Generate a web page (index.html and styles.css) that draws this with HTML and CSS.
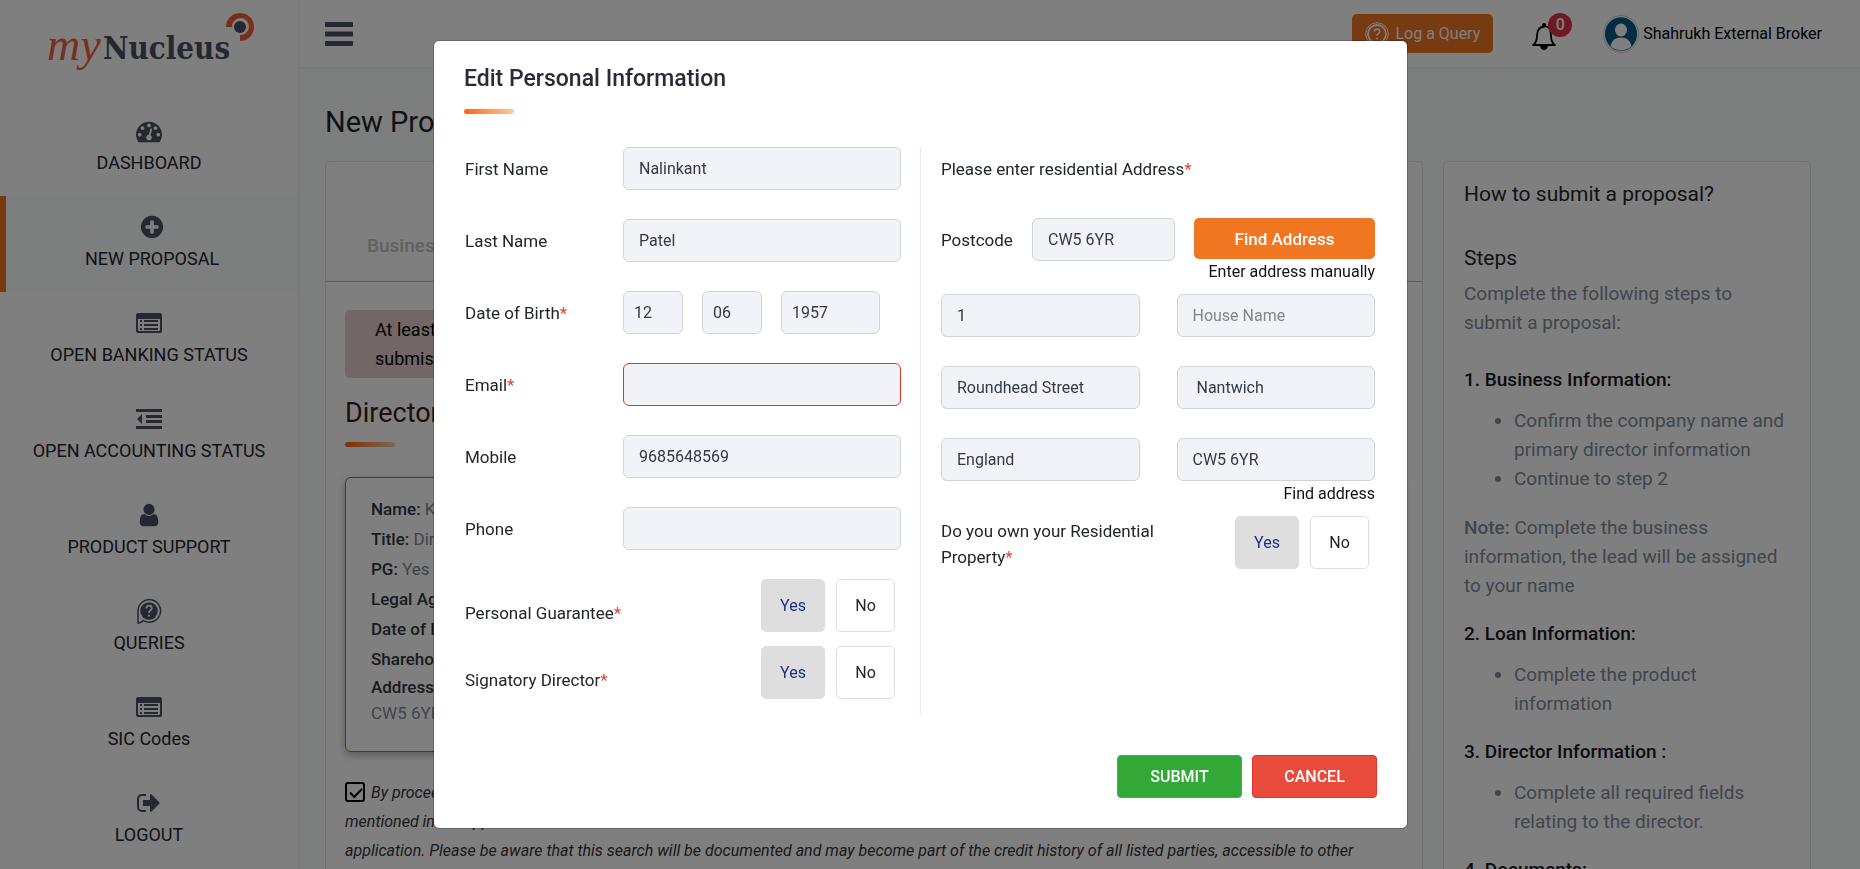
FILE: index.html
```html
<!DOCTYPE html>
<html lang="en">
<head>
<meta charset="utf-8">
<meta name="viewport" content="width=device-width, initial-scale=1">
<title>myNucleus - New Proposal</title>
<link rel="stylesheet" href="styles.css">
</head>
<body>
<div class="app">
  <aside class="sidebar">
    <a class="logo" href="#" aria-label="myNucleus">
      <svg width="210" height="60" viewBox="0 0 210 60">
        <text class="logo-my" x="1" y="48">my</text>
        <text class="logo-name" x="57" y="47">Nucleus</text>
        <path d="M180 15A14 14 0 1 1 194 29V23A8.500 8.500 0 1 0 186 15Z" fill="#f05f36"/>
        <circle cx="194" cy="15" r="6" fill="#4a5063"/>
      </svg>
    </a>
    <nav class="nav">
      <a class="nav-item" href="#">
        <svg class="icon" viewBox="0 0 1792 1792"><path d="M384 1152q0-53-37.500-90.500t-90.500-37.500-90.500 37.500-37.500 90.500 37.500 90.500 90.500 37.500 90.500-37.500 37.500-90.500zm192-448q0-53-37.500-90.500t-90.500-37.500-90.500 37.500-37.500 90.500 37.500 90.500 90.500 37.500 90.500-37.500 37.500-90.500zm428 481l101-382q6-26-7.500-48.500t-38.500-29.500-48 6.500-30 39.500l-101 382q-60 5-107 43.500t-63 98.500q-20 77 20 146t117 89 146-20 89-117q16-60-6-117t-72-91zm660-33q0-53-37.500-90.500t-90.500-37.500-90.500 37.500-37.500 90.500 37.500 90.500 90.500 37.500 90.500-37.500 37.500-90.500zm-640-640q0-53-37.500-90.500t-90.500-37.500-90.500 37.500-37.500 90.500 37.500 90.500 90.500 37.500 90.500-37.500 37.500-90.500zm448 192q0-53-37.500-90.500t-90.500-37.500-90.500 37.500-37.500 90.500 37.500 90.500 90.500 37.500 90.500-37.500 37.500-90.500zm320 448q0 261-141 483-19 29-54 29h-1402q-35 0-54-29-141-221-141-483 0-182 71-348t191-286 286-191 348-71 348 71 286 191 191 286 71 348z"/></svg>
        <span>DASHBOARD</span>
      </a>
      <a class="nav-item active" href="#">
        <svg class="icon" viewBox="0 0 1792 1792"><path d="M1344 960v-128q0-26-19-45t-45-19h-256v-256q0-26-19-45t-45-19h-128q-26 0-45 19t-19 45v256h-256q-26 0-45 19t-19 45v128q0 26 19 45t45 19h256v256q0 26 19 45t45 19h128q26 0 45-19t19-45v-256h256q26 0 45-19t19-45zm320-64q0 209-103 385.500t-279.500 279.500-385.500 103-385.500-103-279.500-279.500-103-385.500 103-385.500 279.500-279.500 385.500-103 385.500 103 279.500 279.500 103 385.500z"/></svg>
        <span>NEW PROPOSAL</span>
      </a>
      <a class="nav-item" href="#">
        <svg class="icon" viewBox="0 0 26 26"><path fill-rule="evenodd" d="M2 3h22a2 2 0 0 1 2 2v16a2 2 0 0 1-2 2H2a2 2 0 0 1-2-2V5a2 2 0 0 1 2-2zm0 6v11a1 1 0 0 0 1 1h20a1 1 0 0 0 1-1V9z"/><path d="M4 10h2v2H4zM4 14h2v2H4zM4 18h2v2H4zM8 10h14v2H8zM8 14h14v2H8zM8 18h14v2H8z"/></svg>
        <span>OPEN BANKING STATUS</span>
      </a>
      <a class="nav-item" href="#">
        <svg class="icon" viewBox="0 0 26 26"><path d="M0 3h26v3H0zM10 9h16v3H10zM10 14h16v3H10zM0 20h26v3H0zM6 8v10L1 13z"/></svg>
        <span>OPEN ACCOUNTING STATUS</span>
      </a>
      <a class="nav-item" href="#">
        <svg class="icon" viewBox="0 0 1792 1792"><path d="M1536 1399q0 109-62.500 187t-150.500 78h-854q-88 0-150.500-78t-62.500-187q0-85 8.500-160.500t31.500-152 58.500-131 94-89 134.500-34.500q131 128 313 128t313-128q76 0 134.500 34.500t94 89 58.500 131 31.500 152 8.500 160.500zm-256-887q0 159-112.500 271.500t-271.500 112.500-271.500-112.500-112.500-271.500 112.500-271.500 271.500-112.500 271.500 112.500 112.500 271.500z"/></svg>
        <span>PRODUCT SUPPORT</span>
      </a>
      <a class="nav-item" href="#">
        <svg class="icon" viewBox="0 0 26 26"><path d="M2 25V13a11.300 11.300 0 1 1 5.500 9.600Q5 24.500 2 25z" fill="none" stroke="#4a5063" stroke-width="1.500"/><circle cx="13" cy="13" r="8.700"/><path d="M10.200 10.500q.3-2.800 2.900-2.800t2.700 2.500q0 1.300-1.500 2.300t-1.300 2.500M13 16.500v2" fill="none" stroke="#fff" stroke-width="1.700"/></svg>
        <span>QUERIES</span>
      </a>
      <a class="nav-item" href="#">
        <svg class="icon" viewBox="0 0 26 26"><path fill-rule="evenodd" d="M2 3h22a2 2 0 0 1 2 2v16a2 2 0 0 1-2 2H2a2 2 0 0 1-2-2V5a2 2 0 0 1 2-2zm0 6v11a1 1 0 0 0 1 1h20a1 1 0 0 0 1-1V9z"/><path d="M4 10h2v2H4zM4 14h2v2H4zM4 18h2v2H4zM8 10h14v2H8zM8 14h14v2H8zM8 18h14v2H8z"/></svg>
        <span>SIC Codes</span>
      </a>
      <a class="nav-item" href="#">
        <svg class="icon" viewBox="0 0 26 26"><path d="M10 5H6a4 4 0 0 0-4 4v8a4 4 0 0 0 4 4h4" fill="none" stroke="#4a5063" stroke-width="2"/><path d="M7 10h7V5q0-1 1-1l8.500 8.500q.5.500 0 1L15 22q-1 0-1-1v-5H7z"/></svg>
        <span>LOGOUT</span>
      </a>
    </nav>
  </aside>

  <div class="main">
    <header class="topbar">
      <button class="menu-btn" type="button" aria-label="Menu">
        <svg width="28" height="24" viewBox="0 0 28 24"><path d="M0 1q0-1 1-1h26q1 0 1 1v3q0 1-1 1H1q-1 0-1-1zM0 10.500q0-1 1-1h26q1 0 1 1v3q0 1-1 1H1q-1 0-1-1zM0 20q0-1 1-1h26q1 0 1 1v3q0 1-1 1H1q-1 0-1-1z" fill="#4a5063"/></svg>
      </button>
      <button class="query-btn" type="button">
        <svg width="24" height="24" viewBox="0 0 24 24" fill="none" stroke="#fff"><circle cx="12" cy="12" r="11.300" stroke-width="1"/><circle cx="12" cy="12" r="9" stroke-width="1.800"/><path d="M9.400 9.600q.2-2.600 2.700-2.600t2.600 2.400q0 1.200-1.500 2.200T12 14M12 15.500v2" stroke-width="1.500"/></svg>
        <span>Log a Query</span>
      </button>
      <button class="bell-btn" type="button" aria-label="Notifications">
        <svg width="26" height="30" viewBox="0 0 26 30"><path d="M2 24q4-2.500 4-9.500 0-8 7-9t7 9q0 7 4 9.500z" fill="none" stroke="#000" stroke-width="1.800" stroke-linejoin="round"/><path d="M9 25h8q-1 4-4 4t-4-4z"/><circle cx="13" cy="4" r="2"/></svg>
        <span class="badge">0</span>
      </button>
      <a class="user" href="#">
        <svg width="36" height="38" viewBox="0 0 36 38"><ellipse cx="18" cy="19" rx="17.500" ry="18.400" fill="#fff" stroke="#ccc"/><ellipse cx="18" cy="19" rx="16" ry="16.800" fill="#005b85"/><ellipse cx="18" cy="15" rx="6" ry="6.500" fill="#fff"/><path d="M7.500 31Q9 22.500 18 22.500T28.500 31Q24 35.300 18 35.300T7.500 31z" fill="#fff"/></svg>
        <span>Shahrukh External Broker</span>
      </a>
    </header>

    <main class="content">
      <h1 class="page-title">New Proposal</h1>
      <div class="columns">
        <section class="card">
          <div class="tabs"><span class="tab">Business</span></div>
          <div class="card-body">
            <p class="alert">At least one director<br>submission</p>
            <h2 class="section-title">Directors</h2>
            <div class="bar"></div>
            <div class="director">
              <p><b>Name:</b> K</p>
              <p><b>Title:</b> Director</p>
              <p><b>PG:</b> Yes</p>
              <p><b>Legal Agreement</b></p>
              <p><b>Date of Birth</b></p>
              <p><b>Shareholding</b></p>
              <p class="address"><b>Address</b><br>CW5 6YR</p>
            </div>
            <div class="consent">
              <input class="consent-check" type="checkbox" id="consent" checked>
              <label for="consent">By proceeding<br>mentioned in the application<br>application. Please be aware that this search will be documented and may become part of the credit history of all listed parties, accessible to other</label>
            </div>
          </div>
        </section>
        <aside class="card help">
          <h3>How to submit a proposal?</h3>
          <h3 class="steps-title">Steps</h3>
          <p>Complete the following steps to<br>submit a proposal:</p>
          <h4 class="first-step">1. Business Information:</h4>
          <ul><li>Confirm the company name and<br>primary director information</li><li>Continue to step 2</li></ul>
          <p class="note"><b>Note:</b> Complete the business<br>information, the lead will be assigned<br>to your name</p>
          <h4>2. Loan Information:</h4>
          <ul><li>Complete the product<br>information</li></ul>
          <h4>3. Director Information :</h4>
          <ul><li>Complete all required fields<br>relating to the director.</li></ul>
          <h4>4. Documents:</h4>
        </aside>
      </div>
    </main>
  </div>
</div>

<div class="overlay">
  <form class="modal" role="dialog" aria-labelledby="modal-title">
    <h2 class="modal-title" id="modal-title">Edit Personal Information</h2>
    <div class="bar"></div>
    <div class="modal-cols">
      <div class="col-left">
        <div class="row"><label for="first">First Name</label><input class="field" id="first" value="Nalinkant"></div>
        <div class="row"><label for="last">Last Name</label><input class="field" id="last" value="Patel"></div>
        <div class="row"><label for="day">Date of Birth<i>*</i></label>
          <div class="dob">
            <input class="field small" id="day" value="12">
            <input class="field small" aria-label="Month" value="06">
            <input class="field small year" aria-label="Year" value="1957">
          </div>
        </div>
        <div class="row"><label for="email">Email<i>*</i></label><input class="field invalid" id="email" type="email"></div>
        <div class="row"><label for="mobile">Mobile</label><input class="field" id="mobile" value="9685648569"></div>
        <div class="row"><label for="phone">Phone</label><input class="field" id="phone"></div>
        <div class="choice-row" role="radiogroup" aria-labelledby="pg-label">
          <span class="choice-label low" id="pg-label">Personal Guarantee<i>*</i></span>
          <label class="choice"><input type="radio" name="pg" checked>Yes</label>
          <label class="choice no"><input type="radio" name="pg">No</label>
        </div>
        <div class="choice-row" role="radiogroup" aria-labelledby="sd-label">
          <span class="choice-label low" id="sd-label">Signatory Director<i>*</i></span>
          <label class="choice"><input type="radio" name="sd" checked>Yes</label>
          <label class="choice no"><input type="radio" name="sd">No</label>
        </div>
      </div>
      <div class="col-right">
        <p class="lead">Please enter residential Address<i>*</i></p>
        <div class="postcode">
          <label for="postcode">Postcode</label>
          <input class="field" id="postcode" value="CW5 6YR">
          <button class="find-btn" type="button">Find Address</button>
        </div>
        <a class="side-link" href="#">Enter address manually</a>
        <div class="address-grid">
          <input class="field" aria-label="House number" value="1">
          <input class="field" aria-label="House name" placeholder="House Name">
          <input class="field" aria-label="Street" value="Roundhead Street">
          <input class="field" aria-label="Town" value=" Nantwich">
          <input class="field" aria-label="Country" value="England">
          <input class="field" aria-label="Address postcode" value="CW5 6YR">
        </div>
        <a class="side-link" href="#">Find address</a>
        <div class="choice-row own" role="radiogroup" aria-labelledby="own-label">
          <span class="choice-label" id="own-label">Do you own your Residential<br>Property<i>*</i></span>
          <label class="choice"><input type="radio" name="own" checked>Yes</label>
          <label class="choice no"><input type="radio" name="own">No</label>
        </div>
      </div>
    </div>
    <div class="actions">
      <button class="action submit" type="submit">SUBMIT</button>
      <button class="action cancel" type="button">CANCEL</button>
    </div>
  </form>
</div>
</body>
</html>
```
FILE: styles.css
```css
* { box-sizing: border-box; }
body { margin: 0; font-family: Roboto, "Liberation Sans", sans-serif; font-size: 16px; color: #22252e; overflow: hidden; }
h1, h2, h3, h4, p, ul { margin: 0; font-weight: 400; }
a { color: inherit; text-decoration: none; }
button, input { font: inherit; }
button { cursor: pointer; }
i { color: #e8403a; font-style: normal; }

.app { display: grid; grid-template-columns: 300px minmax(0, 1fr); height: 100vh; overflow: hidden; background: #f9fefc; }

.sidebar { background: #fff; border-right: 2px solid #f3f5f5; }
.logo { display: block; height: 100px; padding: 12px 0 0 46px; }
.logo svg { display: block; }
.logo-my { font: italic 46px "Liberation Serif", serif; fill: #f05f36; }
.logo-name { font: bold 31px "DejaVu Serif Condensed", "DejaVu Serif", serif; fill: #4a5063; }
.nav-item { display: flex; flex-direction: column; align-items: center; gap: 6px; height: 96px; padding-top: 18px; font-size: 18px; line-height: 26px; }
.nav-item.active { background: #f9fefc; border-left: 6px solid #f07421; }
.icon { width: 26px; height: 26px; fill: #4a5063; }

.topbar { display: flex; align-items: center; height: 69px; padding: 0 38px 0 25px; background: #fff; border-bottom: 2px solid #f0f2f2; }
.menu-btn { display: flex; margin-right: auto; padding: 0; border: 0; background: none; }
.query-btn { display: flex; align-items: center; gap: 6px; height: 39px; padding: 0 13px; border: 0; border-radius: 5px; background: #f07421; color: #fff; font-size: 16px; }
.bell-btn { position: relative; display: flex; margin: 4px 0 0 38px; padding: 0; border: 0; background: none; }
.badge { position: absolute; left: 17px; top: -8px; width: 24px; height: 24px; border-radius: 12px; background: #dc3545; color: #fff; font-size: 16px; font-weight: 500; line-height: 24px; text-align: center; }
.user { display: flex; align-items: center; gap: 4px; margin-left: 46px; color: #000; }

.content { padding: 35px 49px 0 25px; }
.page-title { font-size: 29px; line-height: 36px; }
.columns { display: grid; grid-template-columns: minmax(0, 1fr) 368px; gap: 20px; margin-top: 21px; }
.card { height: 900px; background: #fff; border: 1px solid #dfe3e6; border-radius: 5px; }
.tabs { display: flex; height: 120px; padding: 70px 41px 0; border-bottom: 1px solid #b4b4b4; }
.tab { color: #c2c2c2; font-size: 19px; font-weight: 500; line-height: 28px; }
.card-body { padding: 28px 19px; }
.alert { height: 68px; padding: 5px 30px; border-radius: 5px; background: #e6cccc; color: #000; font-size: 18px; line-height: 29px; }
.section-title { margin-top: 18px; color: #3a1a1e; font-size: 27px; line-height: 34px; }
.bar { width: 50px; height: 5px; border-radius: 3px; background: linear-gradient(90deg, #ff6600, #ffc9a5); }
.section-title + .bar { margin-top: 12px; }
.director { height: 275px; margin-top: 30px; padding: 16px 25px; border: 1px solid #43a51c; border-radius: 6px; box-shadow: 0 3px 8px rgba(0, 0, 0, .3); color: #7f8794; font-size: 17px; line-height: 30px; }
.director b { color: #33363f; font-weight: 500; }
.director .address { line-height: 26px; }
.consent { margin-top: 26px; color: #333; font-size: 16px; font-style: italic; line-height: 29px; }
.consent-check { appearance: none; float: left; width: 20px; height: 20px; margin: 4px 6px 0 0; border: 2px solid #000; border-radius: 3px; }
.consent-check:checked::before { content: ""; display: block; width: 10px; height: 5px; margin: 4px 3px; border: solid #000; border-width: 0 0 2px 2px; transform: rotate(-45deg); }

.help { padding: 18px 20px; color: #7f8b9a; font-size: 19px; line-height: 29px; }
.help h3 { color: #22252e; font-size: 21px; line-height: 29px; }
.help .steps-title { margin: 35px 0 6px; }
.help h4 { margin: 19px 0 12px; color: #16171c; font-size: 19px; font-weight: 500; }
.help .first-step { margin-top: 28px; }
.help ul { padding-left: 50px; }
.help .note { margin-top: 20px; }
.help b { font-weight: 500; }

.overlay { position: fixed; inset: 0; display: flex; align-items: flex-start; justify-content: center; padding: 41px 19px 0 0; background: rgba(0, 0, 0, .5); }
.modal { width: 973px; max-width: 95%; padding: 22px 30px 30px; border-radius: 5px; background: #fff; box-shadow: 0 0 0 1px rgba(0, 0, 0, .2); }
.modal-title { color: #2a2b3a; font-size: 23px; font-weight: 500; line-height: 32px; }
.modal-title + .bar { margin-top: 14px; }
.modal-cols { display: grid; grid-template-columns: 457px minmax(0, 1fr); margin-top: 33px; font-size: 17px; }
.col-left { height: 568px; padding: 0 19px 0 1px; border-right: 1px solid #e6eaf6; }
.row { display: grid; grid-template-columns: 158px minmax(0, 1fr); align-items: center; margin-bottom: 29px; }
.field { width: 100%; height: 43px; padding: 0 15px; border: 1px solid #ced4da; border-radius: 6px; background: #f1f3f8; color: #33394a; font-size: 16px; }
.field::placeholder { color: #7f868d; opacity: 1; }
.field.invalid { border-color: #e5322d; }
.dob { display: flex; gap: 19px; }
.field.small { width: 60px; padding: 0 10px; }
.field.small.year { width: 99px; }
.choice-row { display: flex; align-items: flex-start; gap: 11px; margin-bottom: 14px; padding-right: 6px; }
.choice-label { flex: 1; line-height: 26px; }
.choice-label.low { padding-top: 21px; }
.choice { display: flex; align-items: center; justify-content: center; width: 64px; height: 53px; border: 1px solid #dedede; border-radius: 5px; font-size: 16px; cursor: pointer; }
.choice.no { width: 59px; }
.choice input { position: absolute; opacity: 0; pointer-events: none; }
.choice:has(input:checked) { background: #dedede; color: #1c2f86; }

.col-right { padding: 0 2px 0 20px; }
.lead { height: 71px; line-height: 44px; }
.postcode { display: grid; grid-template-columns: 72px 143px minmax(0, 1fr); column-gap: 19px; align-items: start; }
.postcode label { line-height: 44px; }
.find-btn { height: 41px; border: 0; border-radius: 5px; background: #f07621; color: #fff; font-weight: 500; }
.side-link { display: block; color: #111; font-size: 16px; line-height: 20px; text-align: right; }
.address-grid { display: grid; grid-template-columns: 1fr 1fr; gap: 29px 37px; margin-top: 12px; }
.address-grid + .side-link { margin-top: 3px; }
.choice-row.own { margin-top: 12px; }
.choice-row.own .choice-label { padding-top: 2px; }
.actions { display: flex; justify-content: flex-end; gap: 10px; margin-top: 40px; }
.action { width: 125px; height: 43px; border: 1px solid; border-radius: 4px; color: #fff; font-size: 16px; font-weight: 500; }
.submit { border-color: #28b779; background: #32a937; }
.cancel { border-color: #e5322d; background: #e94c3d; }
```
